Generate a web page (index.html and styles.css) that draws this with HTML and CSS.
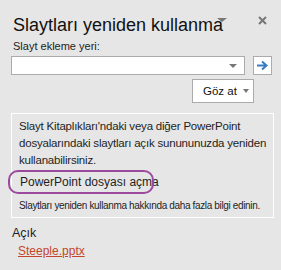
FILE: index.html
```html
<!DOCTYPE html>
<html lang="tr">
<head>
<meta charset="utf-8">
<link rel="stylesheet" href="styles.css">
</head>
<body>
<div class="pane">
  <div class="header">
    <div class="title">Slaytları yeniden kullanma</div>
    <span class="title-caret"></span>
    <svg class="close" width="9" height="9" viewBox="0 0 9 9"><path d="M1 1L8 8M8 1L1 8" stroke="#777" stroke-width="2"/></svg>
  </div>
  <div class="label">Slayt ekleme yeri:</div>
  <div class="input-row">
    <div class="combo"><span class="caret"></span></div>
    <div class="go">
      <svg width="13" height="11" viewBox="0 0 13 11"><path d="M1 5.5H10M6 1.5L10.5 5.5L6 9.5" stroke="#3a7cc0" stroke-width="2" fill="none"/></svg>
    </div>
  </div>
  <div class="browse-row">
    <div class="browse"><span>Göz at</span><span class="caret"></span></div>
  </div>
  <div class="info">
    <p class="desc">Slayt Kitaplıkları'ndaki veya diğer PowerPoint<br>dosyalarındaki slaytları açık sunununuzda yeniden<br>kullanabilirsiniz.</p>
    <div class="open-link">PowerPoint dosyası açma<span class="oval"></span></div>
    <div class="more">Slaytları yeniden kullanma hakkında daha fazla bilgi edinin.</div>
  </div>
  <div class="section">Açık</div>
  <a class="file" href="#">Steeple.pptx</a>
</div>
</body>
</html>
```
FILE: styles.css
```css
html, body {
  margin: 0;
  padding: 0;
  background: #e6e6e6;
}
body {
  font-family: "Liberation Sans", Arial, sans-serif;
  color: #1e1e1e;
  width: 281px;
  height: 270px;
  overflow: hidden;
}
.pane {
  padding: 14px 8px 0 11px;
}
.header {
  display: flex;
  align-items: flex-start;
  height: 22px;
}
.title {
  font-size: 18px;
  line-height: 22px;
  padding-left: 2px;
  color: #111;
  white-space: nowrap;
}
.title-caret {
  width: 0;
  height: 0;
  border-left: 5px solid transparent;
  border-right: 5px solid transparent;
  border-top: 4px solid #777;
  margin: 4px 0 0 -6px;
}
.close {
  margin: 2px 6px 0 auto;
}
.label {
  font-size: 11px;
  line-height: 14px;
  margin-top: 3px;
  padding-left: 2px;
  color: #222;
}
.input-row {
  display: flex;
  gap: 8px;
  margin-top: 3px;
}
.combo {
  width: 232px;
  height: 17px;
  background: #fff;
  border: 1px solid #ababab;
  display: flex;
  align-items: center;
  justify-content: flex-end;
}
.caret {
  display: inline-block;
  width: 0;
  height: 0;
  border-left: 4px solid transparent;
  border-right: 4px solid transparent;
  border-top: 4px solid #777;
}
.combo .caret {
  margin-right: 7px;
}
.go {
  width: 17px;
  height: 17px;
  background: #fff;
  border: 1px solid #ababab;
  display: flex;
  align-items: center;
  justify-content: center;
}
.browse-row {
  display: flex;
  justify-content: flex-end;
  margin-top: 4px;
  padding-right: 19px;
}
.browse {
  box-sizing: border-box;
  width: 62px;
  height: 24px;
  background: #fff;
  border: 1px solid #ababab;
  font-size: 11.5px;
  white-space: nowrap;
  display: flex;
  align-items: center;
  gap: 6px;
  padding: 0 0 0 10px;
  color: #111;
}
.browse .caret {
  border-left-width: 3.5px;
  border-right-width: 3.5px;
}
.info {
  margin-top: 10px;
  border: 1px solid #fff;
  padding: 3.5px 0 4px 7px;
  width: 254px;
}
.desc {
  margin: 0;
  font-size: 11.5px;
  line-height: 17px;
  letter-spacing: -0.2px;
  white-space: nowrap;
}
.open-link {
  position: relative;
  font-size: 12px;
  line-height: 17px;
  margin-top: 5px;
  padding-left: 1px;
}
.oval {
  position: absolute;
  left: -11px;
  top: -4px;
  width: 142px;
  height: 20px;
  border: 2px solid #9b4a9d;
  border-radius: 10px;
}
.more {
  font-size: 10px;
  line-height: 14px;
  letter-spacing: -0.35px;
  white-space: nowrap;
  margin-top: 8.5px;
}
.section {
  font-size: 12.5px;
  line-height: 16px;
  margin-top: 7px;
  padding-left: 1px;
}
.file {
  display: inline-block;
  font-size: 12px;
  line-height: 16px;
  margin-top: 2px;
  margin-left: 7px;
  color: #c4462a;
  text-decoration: underline;
}
```
